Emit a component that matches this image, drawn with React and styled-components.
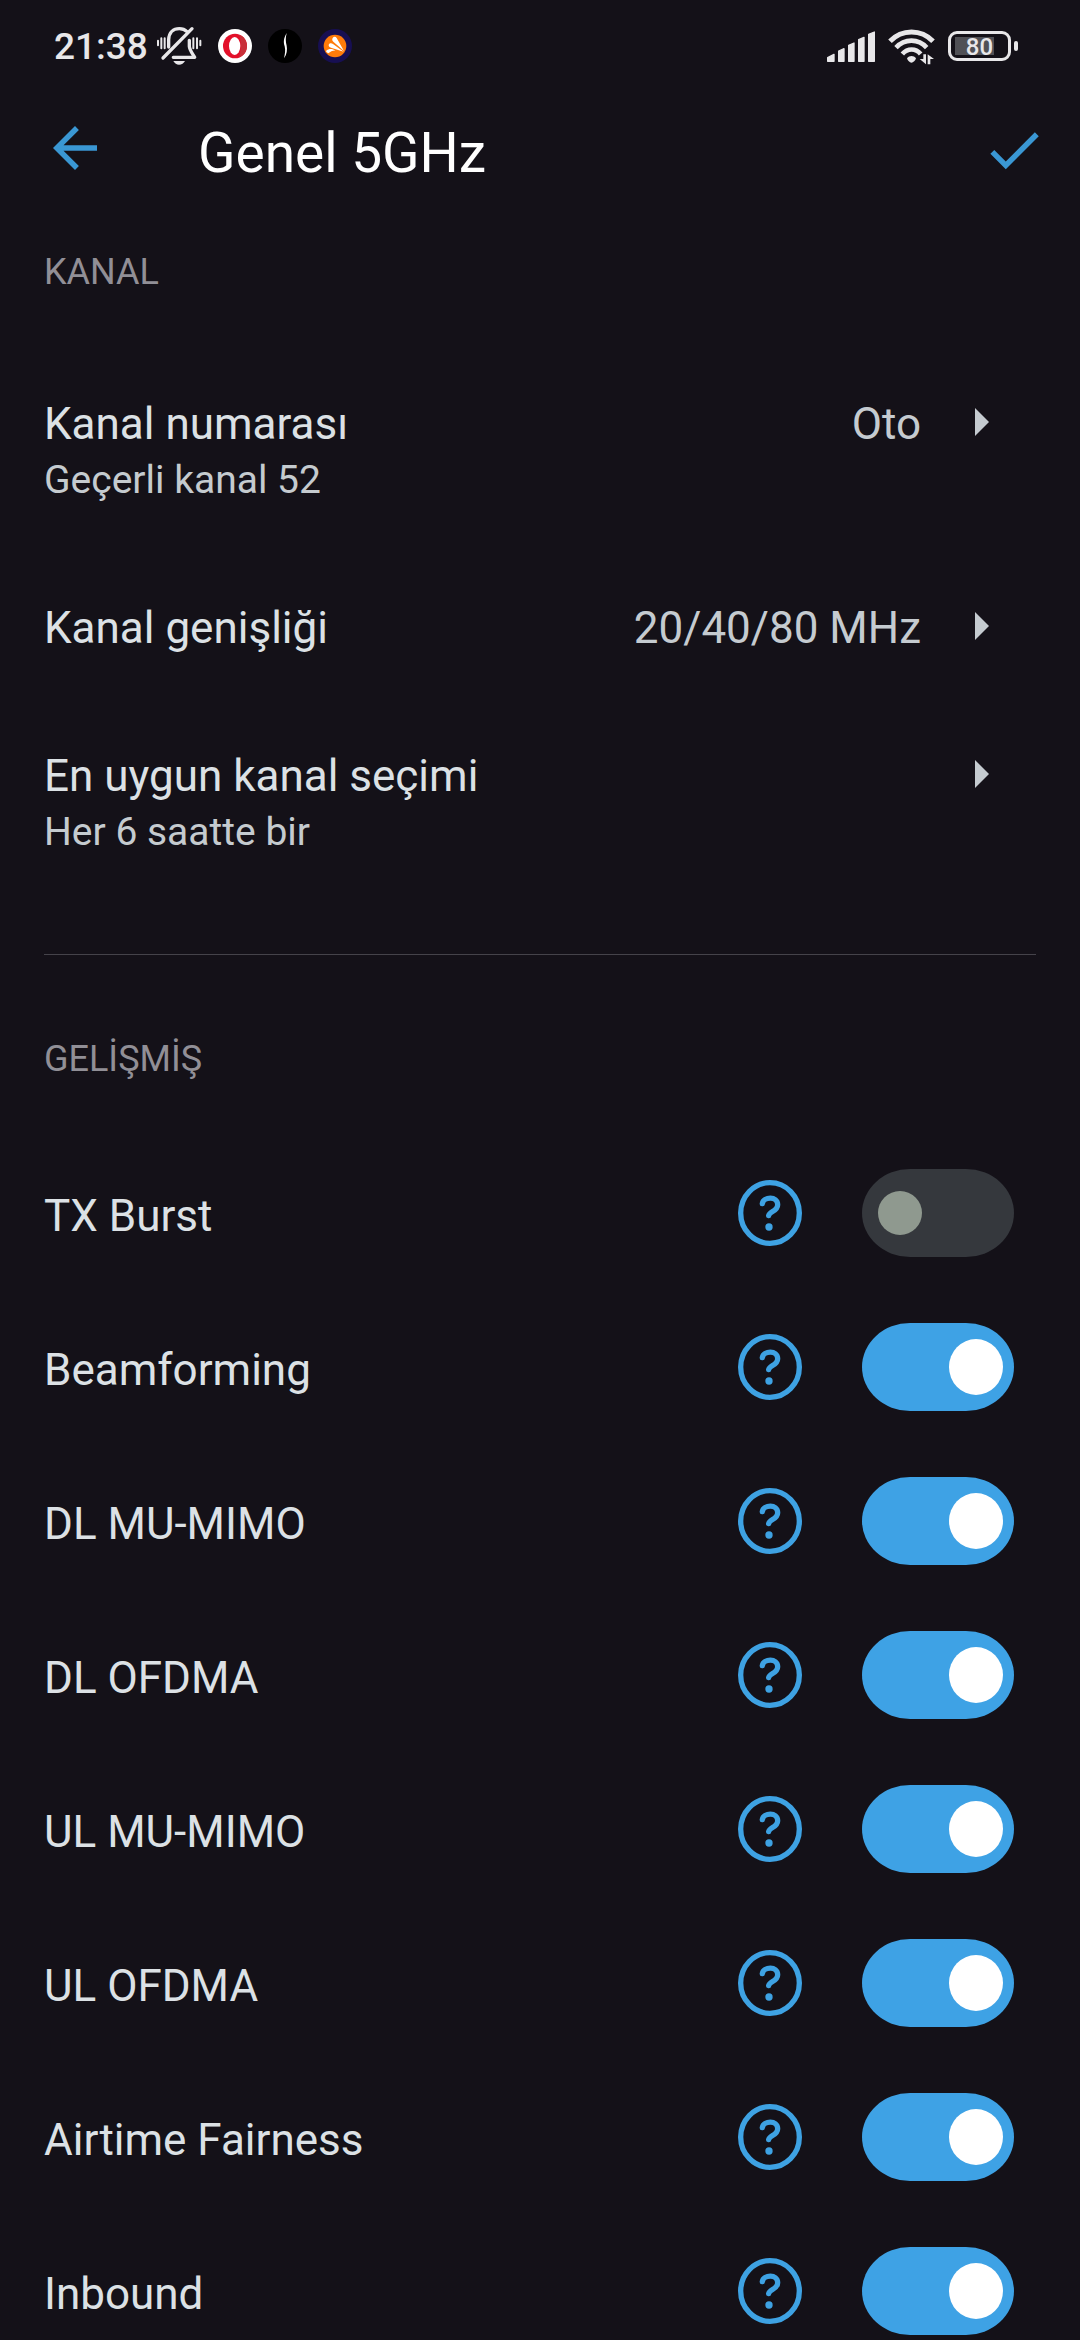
import { useState } from "react";
import styled, { createGlobalStyle } from "styled-components";

const channelRows = [
    { title: "Kanal numarası", note: "Geçerli kanal 52", value: "Oto" },
    { title: "Kanal genişliği", value: "20/40/80 MHz" },
    { title: "En uygun kanal seçimi", note: "Her 6 saatte bir" },
];

const advancedRows = [
    { id: "tx-burst", title: "TX Burst", on: false },
    { id: "beamforming", title: "Beamforming", on: true },
    { id: "dl-mu-mimo", title: "DL MU-MIMO", on: true },
    { id: "dl-ofdma", title: "DL OFDMA", on: true },
    { id: "ul-mu-mimo", title: "UL MU-MIMO", on: true },
    { id: "ul-ofdma", title: "UL OFDMA", on: true },
    { id: "airtime", title: "Airtime Fairness", on: true },
    { id: "inbound", title: "Inbound", on: true },
];

function BellOffIcon() {
    return (
        <svg width="46" height="40" viewBox="378 51 138 120" fill="none" stroke="#e8e7e9" strokeLinecap="round" strokeLinejoin="round">
            <path d="M416 114V92C417 70 430 59 448 59C458 59 465 62 471 68" strokeWidth="10" />
            <path d="M478 94V112C479 124 488 134 494 145H430" strokeWidth="10" />
            <path d="M399 147L486 59" strokeWidth="10" />
            <path d="M430 156H465C461 163 455 167 447 167C440 167 434 163 430 156Z" fill="#e8e7e9" stroke="none" />
            <path d="M384 95V109M394 88V118M404 88V118M490 88V118M501 88V118M511 95V109" strokeWidth="6" />
        </svg>
    )
}

function OperaIcon() {
    return (
        <svg width="34" height="34" viewBox="0 0 102 102">
            <circle cx="51" cy="51" r="51" fill="#fff" />
            <ellipse cx="51" cy="51" rx="36" ry="37" fill="#e3102a" />
            <path d="M62 17C78 21 87 35 87 51C87 67 78 81 62 85C70 76 70 26 62 17Z" fill="#c8303a" />
            <ellipse cx="50" cy="51" rx="17" ry="27" fill="#fff" />
        </svg>
    )
}

function FeatherIcon() {
    return (
        <svg width="34" height="34" viewBox="0 0 102 102">
            <circle cx="51" cy="51" r="51" fill="#000" />
            <path d="M56 12C45 30 47 42 50 52C53 64 51 74 48 88C57 76 58 62 56 50C53 38 52 28 56 12Z" fill="#fff" />
        </svg>
    )
}

function AvastIcon() {
    return (
        <svg width="34" height="34" viewBox="0 0 102 102">
            <circle cx="51" cy="51" r="51" fill="#170f52" />
            <circle cx="51" cy="51" r="34" fill="#ff7b09" />
            <path d="M44 27C47 22 53 22 56 27L78 66L46 38C42 35 42 31 44 27Z" fill="#fff" />
            <path d="M34 44C38 41 42 43 46 46L77 68L39 56C32 53 30 48 34 44Z" fill="#fff" />
            <path d="M24 66C30 60 38 59 44 61L54 65C44 64 38 68 31 73C27 71 25 69 24 66Z" fill="#fff" />
        </svg>
    )
}

function SignalIcon() {
    return (
        <svg width="48" height="31" viewBox="81 63 144 93" fill="#e8e7e9" stroke="#e8e7e9" strokeWidth="4" strokeLinejoin="round">
            <path d="M83 143L102 133V154H83ZM116 123L132 116V154H116ZM146 106L162 99V154H146ZM176 89L192 82V154H176ZM206 73L223 66V154H206Z" />
        </svg>
    )
}

function WifiIcon() {
    return (
        <svg width="47" height="37" viewBox="262 54 141 111" fill="none" stroke="#e8e7e9">
            <path d="M268 94C304 57 361 57 397 94" strokeWidth="15" />
            <path d="M286 113C312 85 353 85 378 113" strokeWidth="14" />
            <path d="M305 132C321 114 345 114 360 132" strokeWidth="14" />
            <path d="M319 145C326 136 339 136 346 145C344 152 338 158 332 158C327 158 321 152 319 145Z" fill="#e8e7e9" stroke="none" />
            <path d="M376 133V163L357 147H368V133ZM381 163V133L400 147H389V163Z" fill="#e8e7e9" stroke="none" />
        </svg>
    )
}

function HelpIcon() {
    return (
        <svg width="64" height="66" viewBox="0 0 192 198" fill="none" stroke="#3ea2e3">
            <ellipse cx="96" cy="99" rx="88" ry="91" strokeWidth="16" />
            <path d="M73 71C76 50 119 47 119 74C119 94 94 94 92 107" strokeWidth="16" strokeLinecap="round" />
            <circle cx="93" cy="141" r="11" fill="#3ea2e3" stroke="none" />
        </svg>
    )
}

export default function App() {

    const [switches, setSwitches] = useState(
        Object.fromEntries(advancedRows.map((row) => [row.id, row.on]))
    );

    function toggle(id) {
        setSwitches({ ...switches, [id]: !switches[id] });
    }

    return (
        <Screen>
            <GlobalStyle />
            <StatusBar>
                <StatusLeft>
                    <Clock>21:38</Clock>
                    <BellOffIcon />
                    <AppIcons>
                        <OperaIcon />
                        <FeatherIcon />
                        <AvastIcon />
                    </AppIcons>
                </StatusLeft>
                <StatusRight>
                    <SignalIcon />
                    <WifiIcon />
                    <Battery>
                        <BatteryBody>80</BatteryBody>
                        <BatteryTip />
                    </Battery>
                </StatusRight>
            </StatusBar>

            <Header>
                <IconButton aria-label="Geri">
                    <svg width="66" height="66" viewBox="0 0 24 24" fill="#3a97d3">
                        <path d="M20 11H7.83l5.59-5.59L12 4l-8 8 8 8 1.41-1.41L7.83 13H20v-2z" />
                    </svg>
                </IconButton>
                <Title>Genel 5GHz</Title>
                <IconButton aria-label="Kaydet">
                    <svg width="66" height="66" viewBox="0 -0.7 24 24" fill="#3a97d3">
                        <path d="M9 16.17L4.83 12l-1.42 1.41L9 19 21 7l-1.41-1.41z" />
                    </svg>
                </IconButton>
            </Header>

            <Content>
                <SectionTitle>KANAL</SectionTitle>
                <ChannelList>
                    {channelRows.map((row) => (
                        <ChannelRow key={row.title}>
                            <RowText>
                                <RowTitle>{row.title}</RowTitle>
                                {row.note && <RowNote>{row.note}</RowNote>}
                            </RowText>
                            <RowValue>{row.value}</RowValue>
                            <Caret width="14" height="28" viewBox="0 0 14 28">
                                <path d="M0 0L14 14L0 28Z" fill="#c5cbd0" />
                            </Caret>
                        </ChannelRow>
                    ))}
                </ChannelList>

                <Divider />

                <SectionTitle>GELİŞMİŞ</SectionTitle>
                <SwitchList>
                    {advancedRows.map((row) => (
                        <SwitchRow key={row.id}>
                            <SwitchLabel htmlFor={row.id}>{row.title}</SwitchLabel>
                            <IconButton aria-label={row.title + " yardım"}>
                                <HelpIcon />
                            </IconButton>
                            <Switch
                                id={row.id}
                                type="checkbox"
                                role="switch"
                                checked={switches[row.id]}
                                onChange={() => toggle(row.id)}
                            />
                        </SwitchRow>
                    ))}
                </SwitchList>
            </Content>
        </Screen>
    )
}

const GlobalStyle = createGlobalStyle`
*{
    box-sizing: border-box;
}
body{
    margin: 0;
    background: #141118;
}
button{
    font: inherit;
    color: inherit;
    background: none;
    border: none;
    padding: 0;
    cursor: pointer;
}
svg{
    display: block;
    flex-shrink: 0;
}
`

const Screen = styled.div`
min-height: 100vh;
background: #141118;
color: #dce1e5;
font-family: Roboto, "Noto Sans", sans-serif;
`

const StatusBar = styled.div`
display: flex;
align-items: center;
justify-content: space-between;
height: 92px;
padding: 0 62px 0 54px;
color: #e8e7e9;
font-weight: 500;
`

const StatusLeft = styled.div`
display: flex;
align-items: center;
gap: 8px;
`

const Clock = styled.span`
font-size: 37px;
line-height: 40px;
padding-top: 2px;
`

const AppIcons = styled.div`
display: flex;
gap: 16px;
margin-left: 8px;
`

const StatusRight = styled.div`
display: flex;
align-items: center;
gap: 13px;
`

const Battery = styled.div`
display: flex;
align-items: center;
gap: 3px;
`

const BatteryBody = styled.div`
width: 63px;
height: 30px;
border: 3px solid #e8e7e9;
border-radius: 9px;
background: linear-gradient(#505055, #505055) 4px 3px / 39px 18px no-repeat;
font-size: 24px;
line-height: 26px;
text-align: center;
`

const BatteryTip = styled.div`
width: 4px;
height: 10px;
border-radius: 2px;
background: #e8e7e9;
`

const Header = styled.header`
display: flex;
align-items: center;
height: 112px;
padding: 0 33px 0 42px;
`

const IconButton = styled.button`
display: flex;
flex-shrink: 0;
`

const Title = styled.h1`
flex: 1;
margin: 0;
padding: 10px 0 0 90px;
color: #fff;
font-size: 55px;
font-weight: 400;
line-height: 64px;
`

const Content = styled.main`
padding: 46px 44px 0;
`

const SectionTitle = styled.h2`
margin: 0;
color: #918f96;
font-size: 36px;
font-weight: 400;
line-height: 44px;
`

const ChannelList = styled.div`
display: flex;
flex-direction: column;
gap: 92px;
padding: 102px 0 94px;
`

const ChannelRow = styled.button`
display: flex;
align-items: flex-start;
padding-right: 47px;
text-align: left;
`

const RowText = styled.span`
display: flex;
flex: 1;
flex-direction: column;
`

const RowTitle = styled.span`
font-size: 44px;
line-height: 56px;
`

const RowNote = styled.span`
color: #c5cbcf;
font-size: 39px;
line-height: 56px;
`

const RowValue = styled.span`
color: #c5cbd0;
font-size: 44px;
line-height: 56px;
`

const Caret = styled.svg`
margin: 12px 0 0 54px;
`

const Divider = styled.hr`
height: 1px;
margin: 0 0 82px;
border: none;
background: #45434a;
`

const SwitchList = styled.div`
display: flex;
flex-direction: column;
gap: 66px;
padding: 88px 22px 0 0;
`

const SwitchRow = styled.div`
display: flex;
align-items: center;
`

const SwitchLabel = styled.label`
flex: 1;
padding-top: 5px;
font-size: 44px;
line-height: 56px;
`

const Switch = styled.input`
appearance: none;
display: flex;
align-items: center;
flex-shrink: 0;
width: 152px;
height: 88px;
margin: 0 0 0 60px;
padding: 0 11px 0 16px;
border-radius: 48px / 44px;
background: #35383d;
cursor: pointer;
&::before{
    content: "";
    width: 44px;
    height: 44px;
    border-radius: 50%;
    background: #8f998f;
}
&:checked{
    justify-content: flex-end;
    background: #3ea2e5;
}
&:checked::before{
    width: 54px;
    height: 56px;
    background: #fff;
}
`
